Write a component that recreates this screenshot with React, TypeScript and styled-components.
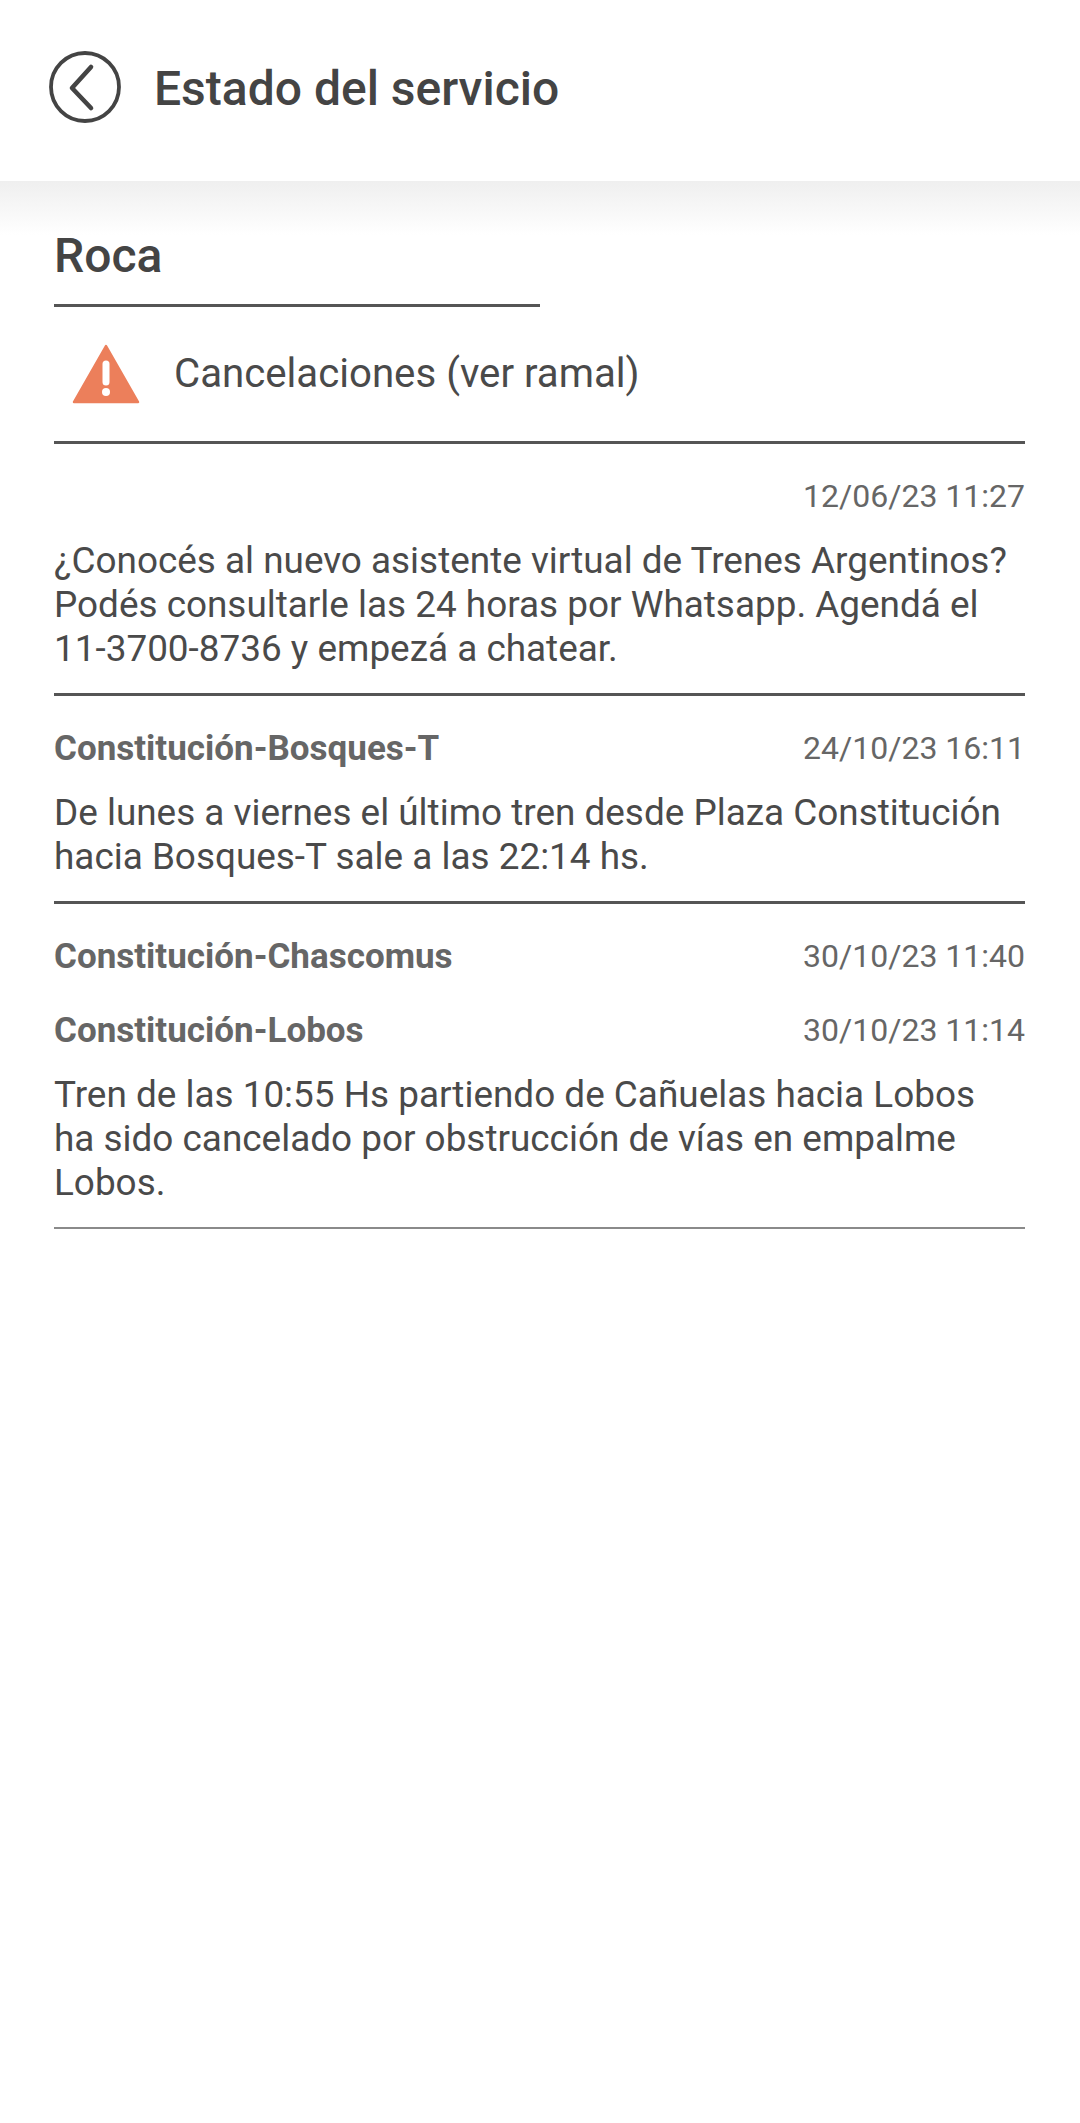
import React from 'react';
import styled, { createGlobalStyle } from 'styled-components';

const GlobalStyle = createGlobalStyle`
  html, body {
    margin: 0;
    padding: 0;
    background: #ffffff;
  }
  body {
    font-family: Roboto, "Liberation Sans", sans-serif;
    color: #444444;
  }
`;

interface Notice {
  branch?: string;
  date: string;
  text?: string[];
  divider?: 'strong' | 'light';
}

const notices: Notice[] = [
  {
    date: '12/06/23 11:27',
    text: [
      '¿Conocés al nuevo asistente virtual de Trenes Argentinos?',
      'Podés consultarle las 24 horas por Whatsapp. Agendá el',
      '11-3700-8736 y empezá a chatear.',
    ],
    divider: 'strong',
  },
  {
    branch: 'Constitución-Bosques-T',
    date: '24/10/23 16:11',
    text: ['De lunes a viernes el último tren desde Plaza Constitución', 'hacia Bosques-T sale a las 22:14 hs.'],
    divider: 'strong',
  },
  { branch: 'Constitución-Chascomus', date: '30/10/23 11:40' },
  {
    branch: 'Constitución-Lobos',
    date: '30/10/23 11:14',
    text: ['Tren de las 10:55 Hs partiendo de Cañuelas hacia Lobos', 'ha sido cancelado por obstrucción de vías en empalme', 'Lobos.'],
    divider: 'light',
  },
];

export default function App(): JSX.Element {
  return (
    <Page>
      <GlobalStyle />
      <Header>
        <svg width="72" height="72" viewBox="0 0 72 72" fill="none" stroke="#444444">
          <circle cx="36" cy="36" r="34" strokeWidth="3.8" />
          <path d="M42 16 L23 37 L42 57" strokeWidth="4.6" strokeLinecap="round" strokeLinejoin="round" />
        </svg>
        <Title>Estado del servicio</Title>
      </Header>
      <Content>
        <LineName>Roca</LineName>
        <StatusRow>
          <svg width="68" height="60" viewBox="0 0 68 60">
            <path d="M34 2 L66 58 L2 58 Z" fill="#ec7f5b" stroke="#ec7f5b" strokeWidth="2.5" strokeLinejoin="round" />
            <path d="M34 20 L34 38" stroke="#ffffff" strokeWidth="7" strokeLinecap="round" />
            <circle cx="34" cy="48" r="4" fill="#ffffff" />
          </svg>
          <StatusText>Cancelaciones (ver ramal)</StatusText>
        </StatusRow>
        {notices.map((notice) => (
          <NoticeBlock key={notice.date} $divider={notice.divider}>
            <NoticeHead>
              <Branch>{notice.branch}</Branch>
              <NoticeDate>{notice.date}</NoticeDate>
            </NoticeHead>
            {notice.text && (
              <NoticeText>
                {notice.text.map((line) => (
                  <TextLine key={line}>{line}</TextLine>
                ))}
              </NoticeText>
            )}
          </NoticeBlock>
        ))}
      </Content>
    </Page>
  );
}

const Page = styled.div`
  width: 1080px;
  min-height: 2123px;
  background: #ffffff;
`;

const Header = styled.header`
  height: 181px;
  box-sizing: border-box;
  padding: 0 0 8px 49px;
  display: flex;
  align-items: center;
  gap: 33px;
  background: #ffffff;
`;

const Title = styled.h1`
  margin: 4px 0 0;
  font-size: 48px;
  line-height: 52px;
  font-weight: 500;
  color: #444444;
`;

const Content = styled.main`
  padding: 0 55px 0 54px;
  background: linear-gradient(#efefef 0, #ffffff 54px) no-repeat;
`;

const LineName = styled.h2`
  width: 486px;
  height: 126px;
  box-sizing: border-box;
  margin: 0;
  padding-top: 50px;
  font-size: 48px;
  line-height: 50px;
  font-weight: 500;
  color: #444444;
  border-bottom: 3px solid #555555;
`;

const StatusRow = styled.div`
  height: 137px;
  box-sizing: border-box;
  padding: 0 0 0 18px;
  display: flex;
  align-items: center;
  gap: 34px;
  border-bottom: 3px solid #555555;
`;

const StatusText = styled.span`
  font-size: 40.2px;
  line-height: 46px;
  color: #4a4a4a;
`;

const NoticeBlock = styled.section<{ $divider?: 'strong' | 'light' }>`
  padding-top: 30px;
  padding-bottom: ${(p) => (p.$divider ? '22px' : '0')};
  border-bottom: ${(p) =>
    p.$divider === 'strong' ? '3px solid #555555' : p.$divider === 'light' ? '2px solid #8a8a8a' : 'none'};
`;

const NoticeHead = styled.div`
  display: flex;
  justify-content: space-between;
  align-items: center;
  height: 44px;
`;

const Branch = styled.span`
  font-size: 35px;
  font-weight: 700;
  color: #666666;
`;

const NoticeDate = styled.span`
  font-size: 32px;
  color: #666666;
`;

const NoticeText = styled.div`
  margin-top: 21px;
  font-size: 36.9px;
  line-height: 44px;
  color: #4a4a4a;
`;

const TextLine = styled.div`
  white-space: nowrap;
`;
